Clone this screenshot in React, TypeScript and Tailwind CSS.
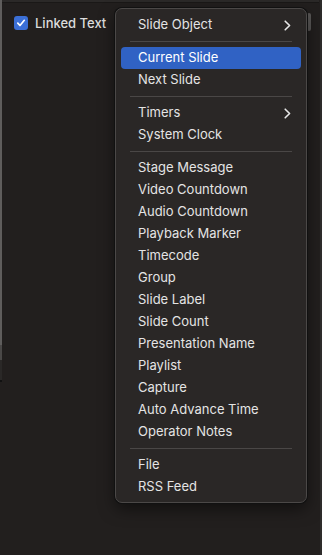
import React from "react";

type Item = { label: string; sub?: boolean; active?: boolean } | "sep";

const items: Item[] = [
  { label: "Slide Object", sub: true },
  "sep",
  { label: "Current Slide", active: true },
  { label: "Next Slide" },
  "sep",
  { label: "Timers", sub: true },
  { label: "System Clock" },
  "sep",
  { label: "Stage Message" },
  { label: "Video Countdown" },
  { label: "Audio Countdown" },
  { label: "Playback Marker" },
  { label: "Timecode" },
  { label: "Group" },
  { label: "Slide Label" },
  { label: "Slide Count" },
  { label: "Presentation Name" },
  { label: "Playlist" },
  { label: "Capture" },
  { label: "Auto Advance Time" },
  { label: "Operator Notes" },
  "sep",
  { label: "File" },
  { label: "RSS Feed" },
];

function Chevron() {
  return (
    <svg width="7" height="11" viewBox="0 0 7 11" fill="none">
      <path d="M1.2 1.2 L5.6 5.5 L1.2 9.8" stroke="#e8e8e8" strokeWidth="1.6" strokeLinecap="round" strokeLinejoin="round" />
    </svg>
  );
}

export default function App() {
  return (
    <div
      className="relative w-[322px] h-[555px] overflow-hidden bg-[#221f1e] flex"
      style={{ fontFamily: "Inter, 'Noto Sans', sans-serif" }}
    >
      <div className="w-[2px] flex flex-col shrink-0">
        <div className="h-[345px] bg-[#5f5d5c]" />
        <div className="h-[15px] bg-[#4a4847]" />
        <div className="h-[20px] bg-[#2a2827]" />
        <div className="h-[2px] bg-[#111]" />
      </div>
      <div className="flex-1 flex flex-col">
        <div className="h-[3px] bg-[#2b2928] border-b border-[#1a1817]" />
        <div className="flex items-center gap-[7px] pl-[12px] pt-[12px]">
          <div className="w-[14px] h-[14px] rounded-[3px] bg-[#3b6fd6] flex items-center justify-center">
            <svg width="10" height="10" viewBox="0 0 10 10" fill="none">
              <path d="M1.8 5.2 L4 7.5 L8.3 2.3" stroke="white" strokeWidth="1.7" strokeLinecap="round" strokeLinejoin="round" />
            </svg>
          </div>
          <span className="text-[13px] text-[#dcdcdc] font-medium leading-[16px]">Linked Text</span>
        </div>
      </div>
      <div className="w-[2px] bg-[#2e2c2b] shrink-0 ml-[1px]" />

      <div className="absolute left-[307px] top-[13px] w-[4px] h-[18px] rounded-full bg-[#5a5857]" />

      <div className="absolute left-[115px] top-[8px] w-[192px] rounded-[7px] bg-[#2a2726] border border-[#4b4847] shadow-[0_0_0_1px_#111,0_6px_16px_rgba(0,0,0,0.5)] px-[5px] pt-[5px] pb-[4px]">
        {items.map((it, i) =>
          it === "sep" ? (
            <div key={i} className="h-[11px] flex items-center px-[9px]">
              <div className="h-px w-full bg-[#4a4746]" />
            </div>
          ) : (
            <div
              key={i}
              className={
                "h-[22px] flex items-center justify-between pl-[17px] pr-[10px] rounded-[4px] text-[13px] " +
                (it.active ? "bg-[#3062c4] text-white" : "text-[#e4e4e4]")
              }
            >
              <span>{it.label}</span>
              {it.sub ? <Chevron /> : null}
            </div>
          )
        )}
      </div>
    </div>
  );
}
